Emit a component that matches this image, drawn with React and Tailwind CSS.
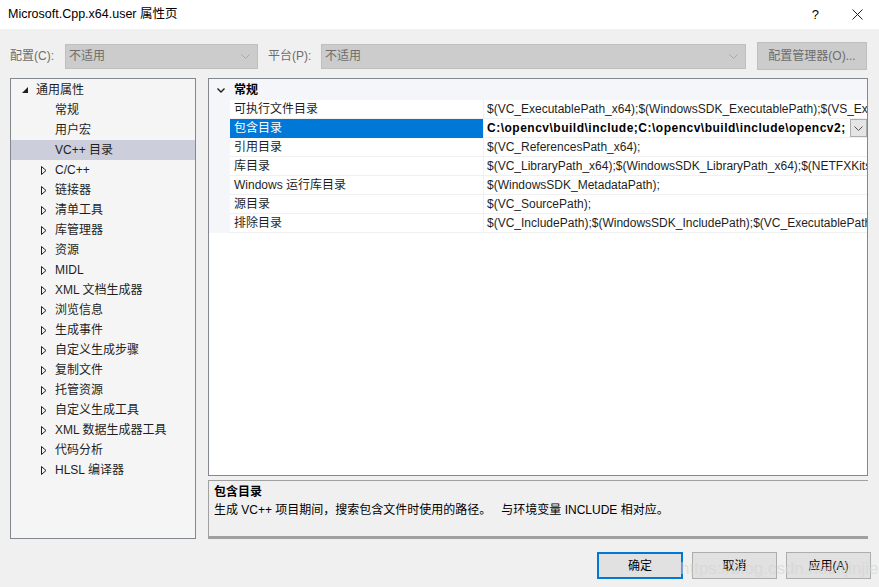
const font = { fontFamily: '"Liberation Sans", "Noto Sans CJK SC", sans-serif' };

const treeItems = [
  { label: '常规', leaf: true },
  { label: '用户宏', leaf: true },
  { label: 'VC++ 目录', leaf: true, selected: true },
  { label: 'C/C++' },
  { label: '链接器' },
  { label: '清单工具' },
  { label: '库管理器' },
  { label: '资源' },
  { label: 'MIDL' },
  { label: 'XML 文档生成器' },
  { label: '浏览信息' },
  { label: '生成事件' },
  { label: '自定义生成步骤' },
  { label: '复制文件' },
  { label: '托管资源' },
  { label: '自定义生成工具' },
  { label: 'XML 数据生成器工具' },
  { label: '代码分析' },
  { label: 'HLSL 编译器' },
];

const rows = [
  { name: '可执行文件目录', value: '$(VC_ExecutablePath_x64);$(WindowsSDK_ExecutablePath);$(VS_ExecutablePath);$(MSBuild_ExecutablePath)' },
  { name: '包含目录', value: 'C:\\opencv\\build\\include;C:\\opencv\\build\\include\\opencv2;', selected: true },
  { name: '引用目录', value: '$(VC_ReferencesPath_x64);' },
  { name: '库目录', value: '$(VC_LibraryPath_x64);$(WindowsSDK_LibraryPath_x64);$(NETFXKitsDir)Lib\\um\\x64' },
  { name: 'Windows 运行库目录', value: '$(WindowsSDK_MetadataPath);' },
  { name: '源目录', value: '$(VC_SourcePath);' },
  { name: '排除目录', value: '$(VC_IncludePath);$(WindowsSDK_IncludePath);$(VC_ExecutablePath_x64);$(VC_LibraryPath_x64)' },
];

const Chevron = ({ color = '#a8a8a8' }) => (
  <svg width="9" height="5" viewBox="0 0 9 5">
    <path d="M0.5 0.5 L4.5 4.5 L8.5 0.5" fill="none" stroke={color} strokeWidth="1" />
  </svg>
);

const Combo = ({ width, text }) => (
  <div className={`flex h-[25px] items-center justify-between border border-[#bfbfbf] bg-[#cccccc] pl-[3px] pr-[7px] text-[#6d6d6d] ${width}`}>
    <span>{text}</span>
    <Chevron />
  </div>
);

const TreeRow = ({ item }) => (
  <div className={`flex h-[20px] items-center ${item.selected ? 'bg-[#cccedb]' : ''}`}>
    <div className="flex w-[44px] justify-end pr-[8px]">
      {!item.leaf && (
        <svg width="6" height="9" viewBox="0 0 6 9">
          <path d="M0.5 0.5 L5 4.5 L0.5 8.5 Z" fill="none" stroke="#1e1e1e" strokeWidth="1" />
        </svg>
      )}
    </div>
    <span className="text-[#1e1e1e]">{item.label}</span>
  </div>
);

const Button = ({ children, primary, width }) => (
  <div
    className={`flex h-[27px] items-center justify-center bg-[#e1e1e1] text-black ${width} ${
      primary ? 'border-2 border-[#0078d7]' : 'border border-[#adadad]'
    }`}
  >
    {children}
  </div>
);

export default function App() {
  return (
    <div className="relative flex h-[587px] w-[879px] flex-col overflow-hidden bg-[#f0f0f0] text-[12px]" style={font}>
      {/* title bar */}
      <div className="flex h-[29px] items-center justify-between bg-white pl-[8px] pr-[16px]">
        <span className="text-[12.5px] text-black">Microsoft.Cpp.x64.user 属性页</span>
        <div className="flex items-center gap-[33px] text-black">
          <span className="text-[13px]">?</span>
          <svg width="11" height="11" viewBox="0 0 11 11">
            <path d="M0.5 0.5 L10.5 10.5 M10.5 0.5 L0.5 10.5" stroke="#222" strokeWidth="1" />
          </svg>
        </div>
      </div>

      {/* configuration row */}
      <div className="mt-[13px] flex h-[28px] items-center pl-[10px]">
        <span className="w-[55px] text-[#6d6d6d]">配置(C):</span>
        <Combo width="w-[193px]" text="不适用" />
        <span className="ml-[10px] w-[53px] text-[#6d6d6d]">平台(P):</span>
        <Combo width="w-[425px]" text="不适用" />
        <div className="ml-[11px] flex h-[28px] w-[110px] items-center justify-center border border-[#bfbfbf] bg-[#cccccc] text-[#6d6d6d]">
          配置管理器(O)...
        </div>
      </div>

      {/* main */}
      <div className="mt-[8px] flex pl-[10px]">
        <div className="h-[461px] w-[186px] border border-[#828790] bg-[#f5f5f5] pt-[1px]">
          <div className="flex h-[20px] items-center">
            <div className="flex w-[25px] justify-end pr-[8px]">
              <svg width="6" height="6" viewBox="0 0 6 6">
                <path d="M6 0 L6 6 L0 6 Z" fill="#1e1e1e" />
              </svg>
            </div>
            <span className="text-[#1e1e1e]">通用属性</span>
          </div>
          {treeItems.map((item) => (
            <TreeRow key={item.label} item={item} />
          ))}
        </div>

        <div className="ml-[12px] flex w-[660px] flex-col">
          {/* property grid */}
          <div className="h-[398px] overflow-hidden border border-[#828790] bg-white">
            <div className="flex h-[21px] items-center bg-[#f4f6f9] pt-[1px]">
              <div className="flex w-[21px] justify-center pl-[2px]">
                <svg width="8" height="5" viewBox="0 0 8 5">
                  <path d="M0.5 0.5 L4 4 L7.5 0.5" fill="none" stroke="#1e1e1e" strokeWidth="1.4" />
                </svg>
              </div>
              <span className="pl-[4px] font-bold text-black">常规</span>
            </div>
            {rows.map((row) => (
              <div key={row.name} className="flex h-[19px]">
                <div className="w-[21px] bg-[#f4f6f9]" />
                <div
                  className={`flex w-[253px] items-center border-b pl-[4px] ${
                    row.selected ? 'border-[#0078d7] bg-[#0078d7] text-white' : 'border-[#f0f0f0] text-[#1e1e1e]'
                  }`}
                >
                  {row.name}
                </div>
                <div className="w-[1px] bg-[#f0f0f0]" />
                <div className="relative flex flex-1 items-center overflow-hidden border-b border-[#f0f0f0] pl-[3px]">
                  <span
                    className={`whitespace-nowrap ${
                      row.selected ? 'font-bold tracking-[0.5px] text-black' : 'text-[#1e1e1e]'
                    }`}
                  >
                    {row.value}
                  </span>
                  {row.selected && (
                    <div className="absolute right-0 top-0 flex h-[18px] w-[17px] items-center justify-center border border-[#adadad] bg-[#e5e5e5]">
                      <Chevron color="#555" />
                    </div>
                  )}
                </div>
              </div>
            ))}
          </div>

          {/* description */}
          <div className="mt-[4px] flex h-[59px] flex-col border-l border-t border-b-[3px] border-[#a0a0a0] bg-[#f0f0f0] pl-[5px] pt-[2px]">
            <span className="h-[18px] font-bold leading-[18px] text-black">包含目录</span>
            <span className="h-[18px] leading-[18px] text-black">
              生成 VC++ 项目期间，搜索包含文件时使用的路径。
              <span className="ml-[10px]">与环境变量 INCLUDE 相对应。</span>
            </span>
          </div>
        </div>
      </div>

      {/* buttons */}
      <div className="mt-[13px] flex justify-end gap-[9px] pr-[8px]">
        <Button primary width="w-[86px]">确定</Button>
        <Button width="w-[85px]">取消</Button>
        <Button width="w-[85px]">应用(A)</Button>
      </div>

      <span className="pointer-events-none absolute left-[680px] top-[556px] text-[17px] text-[#d4d4d4] opacity-60">
        https://blog.csdn.net/lijinjie
      </span>
    </div>
  );
}
